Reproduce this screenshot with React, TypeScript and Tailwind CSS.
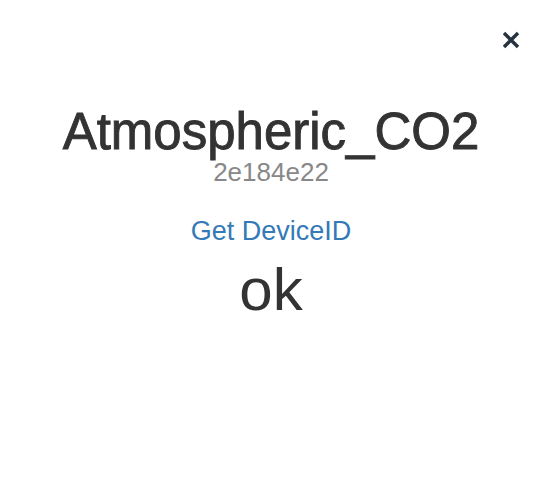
import React from 'react'

const App: React.FC = () => {
  return (
    <div className="w-[542px] h-[496px] bg-white font-['Liberation_Sans',Arial,sans-serif]">
      {/* Close button */}
      <div className="flex justify-end pt-[31px] pr-[22px]">
        <svg width="18" height="18" viewBox="0 0 18 18" className="block">
          <path d="M2 2 L16 16 M16 2 L2 16" stroke="#27323f" strokeWidth="3.4" strokeLinecap="butt" />
        </svg>
      </div>

      <div className="flex flex-col items-center">
        <h1 className="mt-[58px] text-[51px] leading-[50px] text-[#333333] [-webkit-text-stroke:0.9px_#333333]">
          Atmospheric_CO2
        </h1>
        <div className="mt-[2px] text-[26px] leading-[26px] text-[#888888]">2e184e22</div>
        <a className="mt-[33px] text-[27px] leading-[27px] text-[#337ab7]">Get DeviceID</a>
        <div className="mt-[15px] text-[60px] leading-[60px] text-[#333333]">ok</div>
      </div>
    </div>
  )
}

export default App
